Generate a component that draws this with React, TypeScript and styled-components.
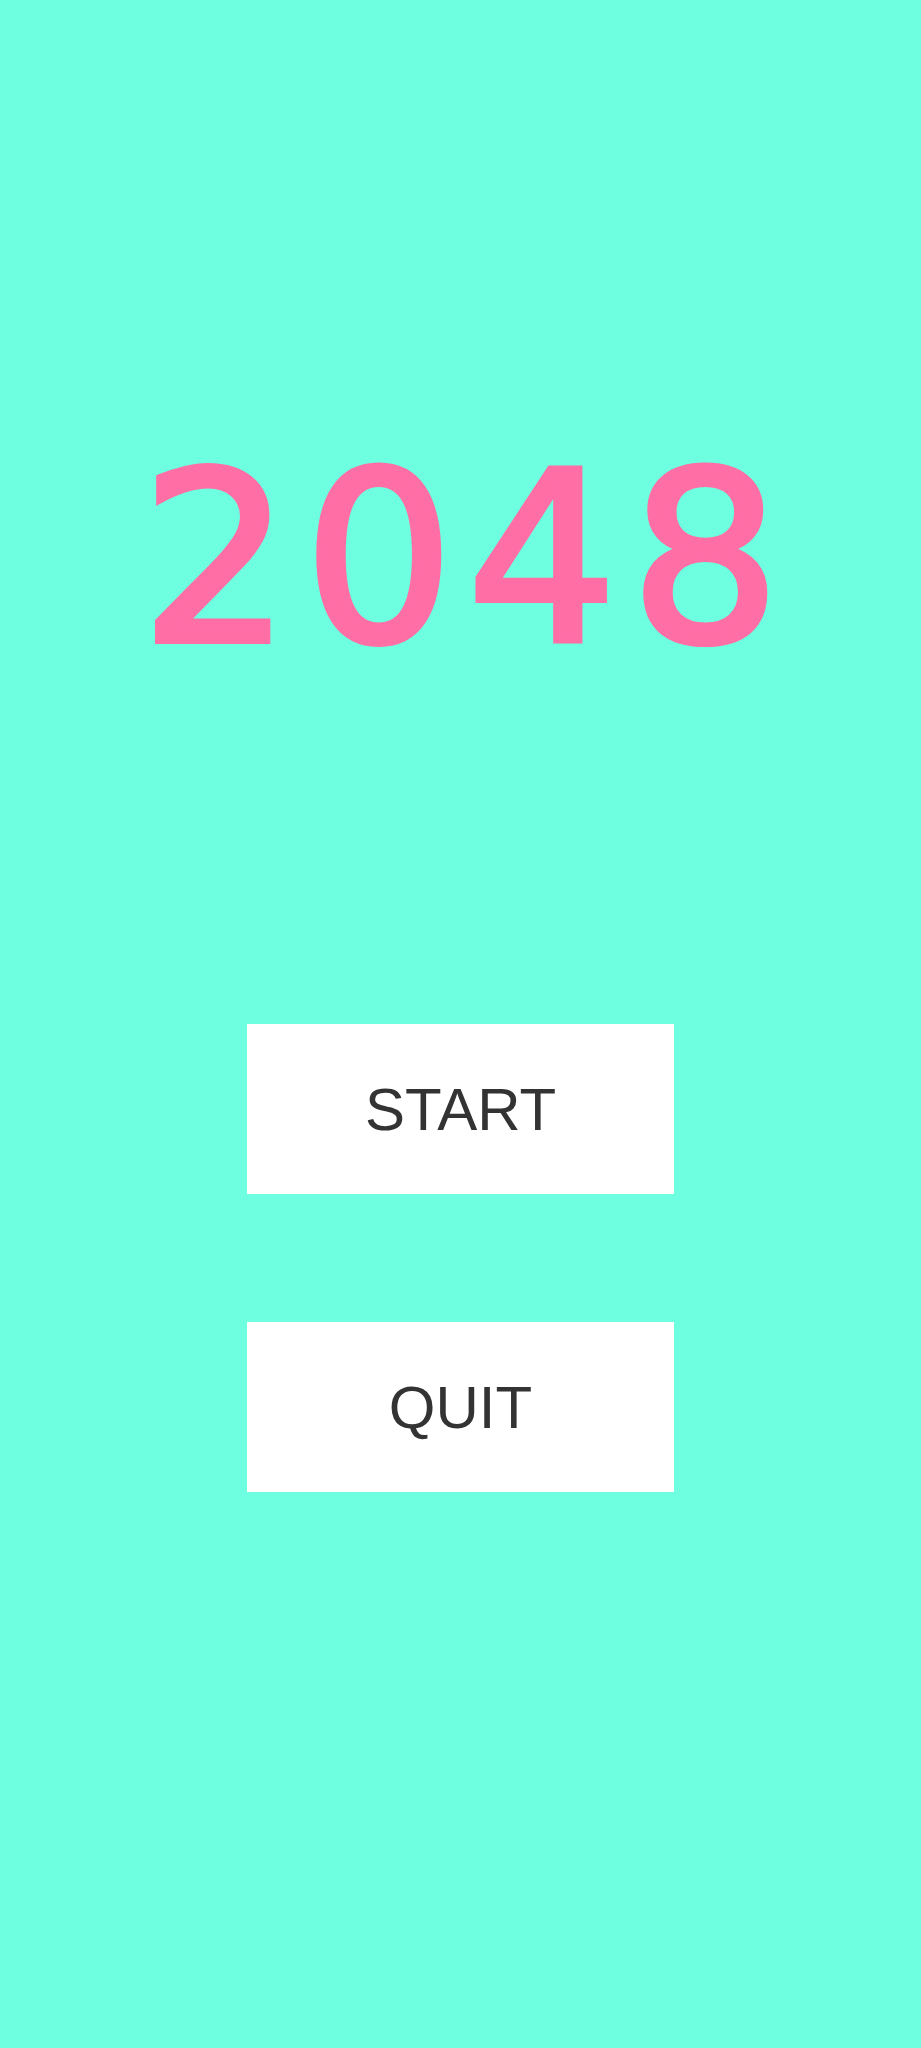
import React from "react";
import styled, { createGlobalStyle } from "styled-components";

const Global = createGlobalStyle`
  html, body {
    margin: 0;
    padding: 0;
    background: #6dffdf;
  }
`;

const Screen = styled.div`
  min-height: 2048px;
  background: #6dffdf;
  display: flex;
  flex-direction: column;
  align-items: center;
`;

const Title = styled.h1`
  margin: 442px 0 0 0;
  font-family: "DejaVu Sans", sans-serif;
  font-weight: 400;
  font-size: 236px;
  line-height: 236px;
  letter-spacing: 13px;
  text-indent: 13px;
  color: #ff6fa6;
  -webkit-text-stroke: 6px #ff6fa6;
`;

const Menu = styled.div`
  margin-top: 346px;
  display: flex;
  flex-direction: column;
  gap: 128px;
`;

const MenuButton = styled.button`
  width: 427px;
  height: 170px;
  border: none;
  background: #ffffff;
  color: #333333;
  font-family: "Liberation Sans", Arial, sans-serif;
  font-size: 60px;
  display: flex;
  align-items: center;
  justify-content: center;
  padding: 0;
  cursor: pointer;
`;

export default function App() {
  return (
    <>
      <Global />
      <Screen>
        <Title>2048</Title>
        <Menu>
          <MenuButton>START</MenuButton>
          <MenuButton>QUIT</MenuButton>
        </Menu>
      </Screen>
    </>
  );
}
